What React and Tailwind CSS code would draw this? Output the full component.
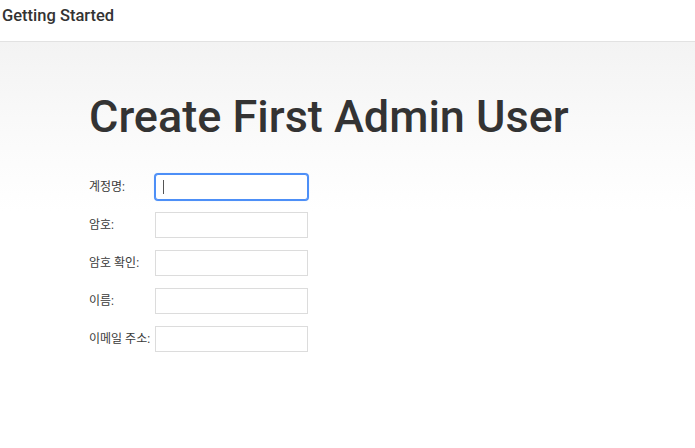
import React from 'react';

const fields = ['계정명:', '암호:', '암호 확인:', '이름:', '이메일 주소:'];

export default function App() {
  return (
    <div className="min-h-screen bg-white text-[#333]" style={{ fontFamily: 'Roboto, "Noto Sans CJK KR", sans-serif' }}>
      {/* Header */}
      <div className="h-[42px] flex items-center pl-[2px] border-b border-[#e2e2e2] bg-white">
        <span className="text-[16.5px] font-medium text-[#333] leading-none -mt-[9px]">Getting Started</span>
      </div>

      {/* Content */}
      <div className="bg-gradient-to-b from-[#f3f3f3] via-[#fafafa] via-[90px] to-white to-[170px] pl-[89px] pt-[52px] pb-[80px]">
        <h1 className="text-[45px] font-medium leading-none text-[#333]">Create First Admin User</h1>

        <div className="mt-[35px] grid grid-cols-[66px_153px] gap-y-[12px] items-center">
          {fields.map((label, i) => (
            <React.Fragment key={label}>
              <label className="text-[12px] text-[#3a3a3a] leading-none whitespace-nowrap">{label}</label>
              {i === 0 ? (
                <div className="relative h-[26px] bg-white border border-[#4d8ff7] rounded-[3px] ring-1 ring-[#4d8ff7] shadow-[0_0_2px_#7fb0ff]">
                  <div className="absolute left-[7px] top-[5px] w-px h-[14px] bg-[#555]" />
                </div>
              ) : (
                <div className="h-[26px] bg-white border border-[#dcdcdc]" />
              )}
            </React.Fragment>
          ))}
        </div>
      </div>
    </div>
  );
}
